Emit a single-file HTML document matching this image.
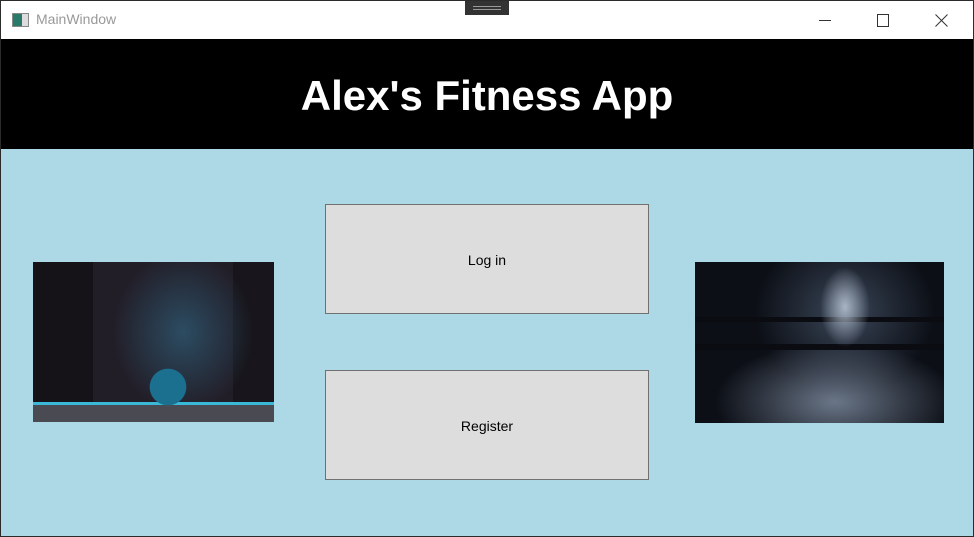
<!DOCTYPE html>
<html><head><style>
*{margin:0;padding:0;box-sizing:border-box}
body{width:974px;height:537px;overflow:hidden;background:#2b2b2b;font-family:"Liberation Sans",sans-serif;position:relative}
.win{position:absolute;left:1px;top:1px;width:972px;height:535px;background:#add8e6}
.title{position:absolute;left:0;top:0;width:972px;height:38px;background:#fff}
.title .t{position:absolute;left:35px;top:10px;font-size:14px;color:#999}
.ico{position:absolute;left:11px;top:12px;width:17px;height:14px;border:1px solid #888;background:linear-gradient(90deg,#2a7a6a 0 60%,#ddd 60%)}
.hdr{position:absolute;left:0;top:38px;width:972px;height:110px;background:#000;color:#fff;font-weight:bold;font-size:42px;text-align:center;line-height:114px}
.btn{position:absolute;left:324px;width:324px;height:110px;background:#dddddd;border:1px solid #707070;font-size:14px;text-align:center;line-height:110px;color:#000}
.img1{position:absolute;left:32px;top:261px;width:241px;height:160px;background:
radial-gradient(ellipse 30px 30px at 135px 125px,#1b6f8f 0 60%,transparent 62%),
linear-gradient(180deg,transparent 0 140px,#3ab8d8 140px 143px,#4a4a52 143px),
radial-gradient(ellipse 70px 80px at 150px 70px,#2c4c62,transparent),
linear-gradient(90deg,#151218 0 60px,#221e28 60px 200px,#18161c 200px)}
.img2{position:absolute;left:694px;top:261px;width:249px;height:161px;background:
radial-gradient(ellipse 25px 40px at 150px 45px,#a8b4c4,transparent),
linear-gradient(180deg,transparent 0 55px,#0a0c12 55px 60px,transparent 60px 82px,#0a0c12 82px 88px,transparent 88px),
radial-gradient(ellipse 120px 60px at 140px 140px,#6a7688,transparent),
radial-gradient(ellipse 90px 80px at 150px 50px,#3a4658,#0c0f16)}
</style></head><body>
<div class="win">
<div class="title"><div class="ico"></div><div class="t">MainWindow</div>
<div style="position:absolute;left:818px;top:19px;width:12px;height:1px;background:#333"></div>
<div style="position:absolute;left:876px;top:13px;width:12px;height:13px;border:1px solid #333"></div>
<svg style="position:absolute;left:934px;top:13px" width="13" height="13"><path d="M0.5 0.5L12.5 12.5M12.5 0.5L0.5 12.5" stroke="#333" stroke-width="1"/></svg>
</div>
<div style="position:absolute;left:464px;top:0;width:44px;height:14px;background:#333"><div style="margin:5px 8px;height:4px;border-top:1px solid #999;border-bottom:1px solid #999"></div></div>
<div class="hdr">Alex's Fitness App</div>
<div class="img1"></div>
<div class="img2"></div>
<div class="btn" style="top:203px">Log in</div>
<div class="btn" style="top:369px">Register</div>
</div>
</body></html>
